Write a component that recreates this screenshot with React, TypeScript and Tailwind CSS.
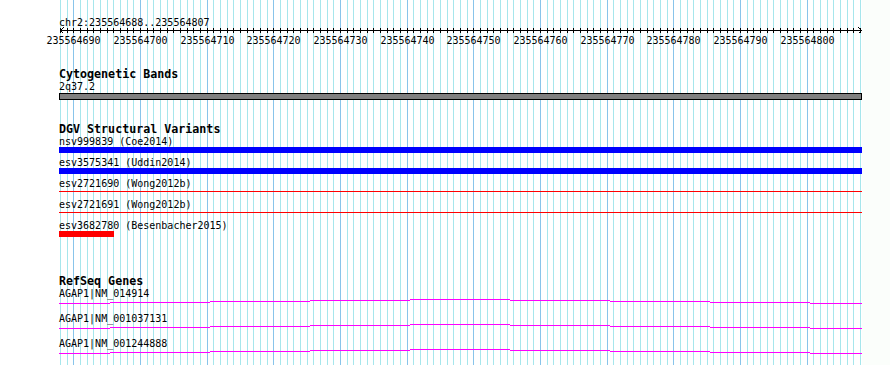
import React from "react";

const X = (k: number) => Math.round(60 + (k * 20) / 3);
const FONT = "'DejaVu Sans Mono', 'Liberation Mono', monospace";

function Grid() {
  return (
    <svg className="absolute left-0 top-0" width={862} height={365} shapeRendering="crispEdges">
      {Array.from({ length: 121 }, (_, k) => (
        <rect key={k} x={X(k)} y={0} width={1} height={365} fill={(k - 2) % 10 === 0 ? "#88c4ea" : "#a6e6ec"} />
      ))}
    </svg>
  );
}

function Ruler() {
  const labels = Array.from({ length: 12 }, (_, m) => ({ k: 2 + 10 * m, v: 235564690 + 10 * m }));
  return (
    <svg className="mt-[16px] block" width={862} height={30} style={{ fontFamily: FONT }}>
      <text x={59} y={10} fontSize={10} fill="#000">chr2:235564688..235564807</text>
      <rect x={60} y={14} width={802} height={1} fill="#000" shapeRendering="crispEdges" />
      {Array.from({ length: 121 }, (_, k) => (
        <rect key={k} x={X(k)} y={12} width={1} height={5} fill="#000" shapeRendering="crispEdges" />
      ))}
      <path d="M63.5 11.5 L60.5 14.5 L63.5 17.5" stroke="#000" strokeWidth={1} fill="none" shapeRendering="crispEdges" />
      <path d="M858.5 11.5 L861.5 14.5 L858.5 17.5" stroke="#000" strokeWidth={1} fill="none" shapeRendering="crispEdges" />
      {labels.map((l) => (
        <text key={l.k} x={X(l.k) + 0.5} y={28} fontSize={10} textAnchor="middle" fill="#000">
          {l.v}
        </text>
      ))}
    </svg>
  );
}

function Title({ children, className }: { children: React.ReactNode; className: string }) {
  return <div className={`h-[13px] text-[11.67px] leading-[14px] font-bold whitespace-pre ${className}`}>{children}</div>;
}

function Label({ children, h12 }: { children: React.ReactNode; h12?: boolean }) {
  return (
    <div className={`${h12 ? "h-[12px]" : "h-[13px]"} text-[10px] leading-[13px] whitespace-pre`}>{children}</div>
  );
}

type Glyph = "blue" | "redline" | "redshort";

function Feature({ label, glyph }: { label: string; glyph: Glyph }) {
  return (
    <div className="flex flex-col">
      <Label h12>{label}</Label>
      {glyph === "blue" && <div className="h-[6px] w-[803px] bg-[#0000ff]" />}
      {glyph === "redline" && (
        <div className="h-[6px] w-[803px] pt-[2px]">
          <div className="h-px w-full bg-[#ff0000]" />
        </div>
      )}
      {glyph === "redshort" && <div className="h-[6px] w-[55px] bg-[#ff0000]" />}
      <div className="h-[3px]" />
    </div>
  );
}

const STEPS = [59, 110, 210, 310, 410, 510, 610, 710, 810, 862];
const LEVELS = [4, 3, 2, 1, 0, 1, 2, 3, 4];

function Gene({ label }: { label: string }) {
  return (
    <div className="flex flex-col">
      <Label h12>{label}</Label>
      <svg className="block" width={803} height={13} shapeRendering="crispEdges">
        {LEVELS.map((lv, i) => (
          <rect key={i} x={STEPS[i] - 59} y={lv} width={STEPS[i + 1] - STEPS[i]} height={1} fill="#ff00ff" />
        ))}
      </svg>
    </div>
  );
}

export default function App() {
  return (
    <div className="flex h-[365px] w-[890px] overflow-hidden bg-[#fbfefb] text-black" style={{ fontFamily: FONT }}>
      <div className="relative h-[365px] w-[862px] shrink-0 bg-white">
        <Grid />
        <div className="relative flex flex-col">
          <Ruler />
          <div className="flex flex-col pl-[59px]">
            <Title className="mt-[21px]">Cytogenetic Bands</Title>
            <Label>2q37.2</Label>
            <div className="h-[7px] w-[803px] border border-black bg-[#808080]" />
            <Title className="mt-[22px]">DGV Structural Variants</Title>
            <Feature label="nsv999839 (Coe2014)" glyph="blue" />
            <Feature label="esv3575341 (Uddin2014)" glyph="blue" />
            <Feature label="esv2721690 (Wong2012b)" glyph="redline" />
            <Feature label="esv2721691 (Wong2012b)" glyph="redline" />
            <Feature label="esv3682780 (Besenbacher2015)" glyph="redshort" />
            <Title className="mt-[34px]">RefSeq Genes</Title>
            <Gene label="AGAP1|NM_014914" />
            <Gene label="AGAP1|NM_001037131" />
            <Gene label="AGAP1|NM_001244888" />
          </div>
        </div>
      </div>
    </div>
  );
}
